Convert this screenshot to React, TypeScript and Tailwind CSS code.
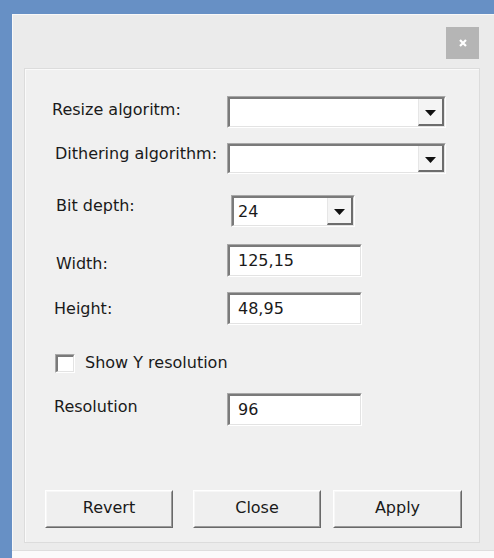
import type { ReactNode } from 'react';

function Sunken({ className, children }: { className: string; children?: ReactNode }) {
  return (
    <div
      className={
        'border border-t-[#a8a8a8] border-l-[#a8a8a8] border-b-white border-r-white ' + className
      }
    >
      <div className="flex h-full border border-t-2 border-l-2 border-t-[#7a7a7a] border-l-[#7a7a7a] border-b-[#e3e3e3] border-r-[#e3e3e3] bg-white">
        {children}
      </div>
    </div>
  );
}

function Combo({ className, value }: { className: string; value?: string }) {
  return (
    <Sunken className={className}>
      <div className="flex flex-1 items-center pl-[4px] pt-[1px] text-[16px]">{value}</div>
      <div className="flex w-[26px] items-center justify-center border-b-2 border-r-2 border-l border-b-[#6d6d6d] border-r-[#6d6d6d] border-l-[#e6e6e6] bg-[#f4f4f4]">
        <svg width="11" height="6" viewBox="0 0 11 6" className="mt-[3px]">
          <path d="M0 0h11L5.5 6z" fill="#111" />
        </svg>
      </div>
    </Sunken>
  );
}

function Field({ value }: { value: string }) {
  return (
    <Sunken className="h-[33px] w-[135px]">
      <div className="flex flex-1 items-center pl-[8px] text-[16px]">{value}</div>
    </Sunken>
  );
}

function Row({
  label,
  labelClass,
  children,
  className,
}: {
  label: string;
  labelClass: string;
  children: ReactNode;
  className: string;
}) {
  return (
    <div className={'flex items-center ' + className}>
      <div className="w-[202px] shrink-0">
        <span className={'block ' + labelClass}>{label}</span>
      </div>
      {children}
    </div>
  );
}

function RaisedButton({ label, className }: { label: string; className: string }) {
  return (
    <div
      className={
        'border border-t-white border-l-white border-b-[#696969] border-r-[#696969] ' + className
      }
    >
      <div className="flex h-full items-center justify-center border border-t-[#f7f7f7] border-l-[#f7f7f7] border-b-[#9a9a9a] border-r-[#9a9a9a] bg-[#efefef] pb-[3px] text-[16px]">
        {label}
      </div>
    </div>
  );
}

export default function App() {
  return (
    <div className="flex h-[558px] w-[494px] flex-col overflow-hidden bg-[#6790c5] font-['DejaVu_Sans',sans-serif] text-[16px] text-[#1a1a1a]">
      <div className="h-[14px] shrink-0" />
      <div className="flex flex-1 pl-[12px]">
        <div className="flex flex-1 flex-col">
          {/* Dialog */}
          <div className="flex h-[536px] flex-col border-l border-t border-[#f8f8f8] bg-[#ebebeb]">
            <div className="flex justify-end pr-[15px] pt-[12px]">
              <div className="flex h-[32px] w-[33px] items-center justify-center bg-[#b5b5b5]">
                <svg width="8" height="8" viewBox="0 0 8 8">
                  <path d="M1 1l6 6M7 1l-6 6" stroke="#fff" strokeWidth="2.2" />
                </svg>
              </div>
            </div>

            {/* Panel */}
            <div className="ml-[11px] mr-[14px] mt-[9px] flex h-[475px] flex-col border border-[#dcdcdc] bg-[#f0f0f0] pt-[27px] shadow-[inset_1px_1px_0_#fafafa]">
              <Row label="Resize algoritm:" labelClass="pl-[27px] -mt-[4px]" className="">
                <Combo className="h-[32px] w-[219px]" />
              </Row>
              <Row label="Dithering algorithm:" labelClass="pl-[30px] -mt-[9px]" className="mt-[15px]">
                <Combo className="h-[31px] w-[219px]" />
              </Row>
              <Row label="Bit depth:" labelClass="pl-[31px] -mt-[10px]" className="mt-[21px]">
                <Combo className="ml-[4px] h-[32px] w-[124px]" value="24" />
              </Row>
              <Row label="Width:" labelClass="pl-[31px] mt-[6px]" className="mt-[17px]">
                <Field value="125,15" />
              </Row>
              <Row label="Height:" labelClass="pl-[29px]" className="mt-[15px]">
                <Field value="48,95" />
              </Row>
              <div className="mt-[26px] flex items-center pl-[30px]">
                <Sunken className="h-[19px] w-[20px]" />
                <span className="ml-[10px]">Show Y resolution</span>
              </div>
              <Row label="Resolution" labelClass="pl-[29px] -mt-[6px]" className="mt-[18px]">
                <Field value="96" />
              </Row>
              <div className="mt-[64px] flex pl-[20px]">
                <RaisedButton label="Revert" className="h-[38px] w-[128px]" />
                <RaisedButton label="Close" className="ml-[20px] h-[38px] w-[128px]" />
                <RaisedButton label="Apply" className="ml-[12px] h-[38px] w-[129px]" />
              </div>
            </div>
          </div>
          <div className="flex-1 border-t border-[#dedede] bg-[#fbfbfb]" />
        </div>
      </div>
    </div>
  );
}
